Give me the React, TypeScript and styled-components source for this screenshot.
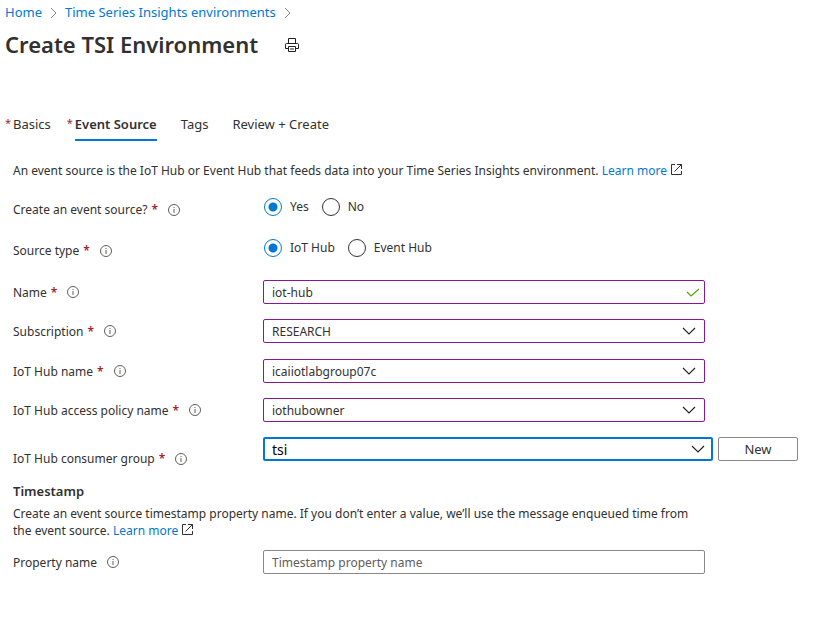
import React, { useState } from "react";
import styled, { createGlobalStyle, css } from "styled-components";

const blue = "#0078d4";
const ink = "#323130";
const red = "#a4262c";
const purple = "#881798";

const GlobalStyle = createGlobalStyle`
  *, *::before, *::after { box-sizing: border-box; }
  body {
    margin: 0;
    background: #fff;
    color: ${ink};
    font-family: "Noto Sans", "Segoe UI", "Open Sans", sans-serif;
    font-size: 12px;
    line-height: 17px;
  }
  button, input, select { font: inherit; color: inherit; }
`;

const Page = styled.div`
  padding: 4px 42px 24px 5px;
`;

const Breadcrumb = styled.nav`
  display: flex;
  align-items: center;
  gap: 8px;
  height: 17px;
  font-size: 13px;
`;

const Link = styled.a`
  color: ${blue};
  text-decoration: none;
  &:hover { text-decoration: underline; }
`;

const TitleBar = styled.header`
  display: flex;
  align-items: center;
  gap: 27px;
  margin-top: 8px;
`;

const Title = styled.h1`
  margin: 0;
  font-size: 22px;
  line-height: 30px;
  font-weight: 600;
`;

const IconButton = styled.button`
  display: flex;
  padding: 2px 0 0;
  border: 0;
  background: none;
`;

const Tabs = styled.div`
  display: flex;
  gap: 24px;
  margin-top: 55px;
  padding-left: 8px;
`;

const Tab = styled.button<{ $active?: boolean; $starred?: boolean }>`
  position: relative;
  height: 27px;
  padding: 0 0 5px;
  border: 0;
  border-bottom: 2px solid ${(p) => (p.$active ? blue : "transparent")};
  background: none;
  font-size: 13px;
  font-weight: ${(p) => (p.$active ? 600 : 400)};
  white-space: nowrap;
  ${(p) =>
    p.$starred &&
    css`
      &::before {
        content: "*";
        position: absolute;
        top: 0;
        left: -8px;
        color: ${red};
        font-size: 11px;
        font-weight: 400;
      }
    `}
`;

const Panel = styled.form`
  padding-left: 8px;
`;

const Paragraph = styled.p<{ $before: number }>`
  max-width: 692px;
  margin: ${(p) => p.$before}px 0 0;
`;

const Row = styled.div<{ $before: number; $wide?: boolean }>`
  display: grid;
  grid-template-columns: 250px minmax(0, 1fr);
  align-items: ${(p) => (p.$wide ? "start" : "center")};
  margin-top: ${(p) => p.$before}px;
  padding-right: ${(p) => (p.$wide ? 0 : 93)}px;
`;

const LabelCell = styled.div<{ $low?: number }>`
  display: flex;
  align-items: center;
  padding-top: ${(p) => p.$low ?? 0}px;
`;

const Star = styled.span`
  margin-left: 4px;
  color: ${red};
  font-weight: 600;
`;

const InfoIcon = styled.svg`
  margin-left: 10px;
  flex: none;
`;

const Field = styled.div`
  position: relative;
  flex: 1;
  min-width: 0;
`;

const control = css<{ $edge: string; $thick?: boolean }>`
  display: block;
  width: 100%;
  height: 24px;
  padding: 0 32px 0 ${(p) => (p.$thick ? 7 : 8)}px;
  border: ${(p) => (p.$thick ? 2 : 1)}px solid ${(p) => p.$edge};
  border-radius: 2px;
  background: #fff;
  color: ${(p) => (p.$thick ? "#000" : ink)};
  font-size: ${(p) => (p.$thick ? 14 : 12)}px;
  outline: 0;
  appearance: none;
`;

const TextInput = styled.input`
  ${control}
  &::placeholder { color: #605e5c; opacity: 1; }
`;

const Select = styled.select`
  ${control}
`;

const FieldIcon = styled.svg<{ $right: number }>`
  position: absolute;
  top: 6px;
  right: ${(p) => p.$right}px;
  pointer-events: none;
`;

const Inline = styled.div`
  display: flex;
  gap: 5px;
`;

const NewButton = styled.button`
  width: 80px;
  height: 24px;
  padding: 0;
  border: 1px solid #8a8886;
  border-radius: 2px;
  background: #fff;
  font-size: 13px;
`;

const RadioGroup = styled.div`
  display: flex;
  gap: 13px;
  padding-left: 1px;
`;

const RadioLabel = styled.label`
  display: flex;
  align-items: center;
  gap: 8px;
`;

const Radio = styled.input`
  width: 18px;
  height: 18px;
  margin: 0;
  border: 1px solid ${ink};
  border-radius: 50%;
  appearance: none;
  &:checked {
    border-color: ${blue};
    background: radial-gradient(circle, ${blue} 4px, #fff 5px);
  }
`;

const SectionTitle = styled.h2`
  margin: 16px 0 0;
  font-size: 13px;
  line-height: 17px;
  font-weight: 600;
`;

const OutIcon = styled.svg`
  margin-left: 4px;
`;

const Crumb = () => (
  <svg width="7" height="12" viewBox="0 0 7 12" fill="none" stroke="#8a8886">
    <path d="M1 1l5 5-5 5" />
  </svg>
);

const Info = () => (
  <InfoIcon width="12" height="12" viewBox="0 0 12 12" fill="none" stroke="#605e5c">
    <circle cx="6" cy="6" r="5.5" />
    <path d="M6 5v4M6 3v1" />
  </InfoIcon>
);

const Chevron = ({ right }: { right: number }) => (
  <FieldIcon $right={right} width="14" height="12" viewBox="0 0 14 12" fill="none" stroke="#201f1e" strokeWidth="1.1">
    <path d="M1 3l6 6 6-6" />
  </FieldIcon>
);

const External = () => (
  <OutIcon width="11" height="11" viewBox="0 0 11 11" fill="none" stroke={ink}>
    <path d="M4 .5H.5v10h10V7M6 .5h4.5V5M10.5.5L3.5 7.5" />
  </OutIcon>
);

const Printer = () => (
  <svg width="14" height="14" viewBox="0 0 14 14" fill="none" stroke="#201f1e">
    <path d="M3.5 5.5v-5h7v5M3.5 10.5h-3v-4q0-1 1-1h11q1 0 1 1v4h-3M3.5 8.5h7v5h-7zM5 11h4" />
  </svg>
);

type LabelProps = { id: string; text: string; required?: boolean; low?: number; group?: boolean };

const Label = ({ id, text, required, low, group }: LabelProps) => (
  <LabelCell $low={low}>
    {group ? <span id={id}>{text}</span> : <label htmlFor={id}>{text}</label>}
    {required && <Star>*</Star>}
    <Info />
  </LabelCell>
);

type ChoiceProps = { name: string; label: string; options: string[]; before: number };

const Choice = ({ name, label, options, before }: ChoiceProps) => (
  <Row $before={before}>
    <Label id={name} text={label} required low={6} group />
    <RadioGroup role="radiogroup" aria-labelledby={name}>
      {options.map((option, i) => (
        <RadioLabel key={option}>
          <Radio type="radio" name={name} defaultChecked={i === 0} />
          {option}
        </RadioLabel>
      ))}
    </RadioGroup>
  </Row>
);

const dropdowns = [
  { id: "subscription", label: "Subscription", value: "RESEARCH", before: 15 },
  { id: "hub", label: "IoT Hub name", value: "icaiiotlabgroup07c", before: 16 },
  { id: "policy", label: "IoT Hub access policy name", value: "iothubowner", before: 15 },
];

const tabs = [
  { name: "Basics", starred: true },
  { name: "Event Source", starred: true },
  { name: "Tags" },
  { name: "Review + Create" },
];

export default function App() {
  const [active, setActive] = useState("Event Source");
  return (
    <Page>
      <GlobalStyle />
      <Breadcrumb aria-label="Breadcrumb">
        <Link href="#home">Home</Link>
        <Crumb />
        <Link href="#environments">Time Series Insights environments</Link>
        <Crumb />
      </Breadcrumb>
      <TitleBar>
        <Title>Create TSI Environment</Title>
        <IconButton type="button" aria-label="Print">
          <Printer />
        </IconButton>
      </TitleBar>
      <Tabs role="tablist">
        {tabs.map((t) => (
          <Tab
            key={t.name}
            type="button"
            role="tab"
            aria-selected={active === t.name}
            $active={active === t.name}
            $starred={t.starred}
            onClick={() => setActive(t.name)}
          >
            {t.name}
          </Tab>
        ))}
      </Tabs>
      <Panel onSubmit={(e) => e.preventDefault()}>
        <Paragraph $before={21}>
          An event source is the IoT Hub or Event Hub that feeds data into your Time Series Insights environment.{" "}
          <Link href="#event-source">Learn more</Link>
          <External />
        </Paragraph>
        <Choice name="create" label="Create an event source?" options={["Yes", "No"]} before={16} />
        <Choice name="type" label="Source type" options={["IoT Hub", "Event Hub"]} before={18} />
        <Row $before={21}>
          <Label id="name" text="Name" required />
          <Field>
            <TextInput id="name" $edge={purple} defaultValue="iot-hub" />
            <FieldIcon $right={5} width="14" height="12" viewBox="0 0 14 12" fill="none" stroke="#57a300" strokeWidth="1.2">
              <path d="M1 6l4 4 8-7" />
            </FieldIcon>
          </Field>
        </Row>
        {dropdowns.map((d) => (
          <Row key={d.id} $before={d.before}>
            <Label id={d.id} text={d.label} required />
            <Field>
              <Select id={d.id} $edge={purple}>
                <option>{d.value}</option>
              </Select>
              <Chevron right={9} />
            </Field>
          </Row>
        ))}
        <Row $before={15} $wide>
          <Label id="consumer" text="IoT Hub consumer group" required low={13} />
          <Inline>
            <Field>
              <Select id="consumer" $edge={blue} $thick>
                <option>tsi</option>
              </Select>
              <Chevron right={8} />
            </Field>
            <NewButton type="button">New</NewButton>
          </Inline>
        </Row>
        <SectionTitle>Timestamp</SectionTitle>
        <Paragraph $before={5}>
          Create an event source timestamp property name. If you don’t enter a value, we’ll use the message enqueued
          time from the event source. <Link href="#timestamp">Learn more</Link>
          <External />
        </Paragraph>
        <Row $before={11}>
          <Label id="property" text="Property name" />
          <Field>
            <TextInput id="property" $edge="#8a8886" placeholder="Timestamp property name" />
          </Field>
        </Row>
      </Panel>
    </Page>
  );
}
